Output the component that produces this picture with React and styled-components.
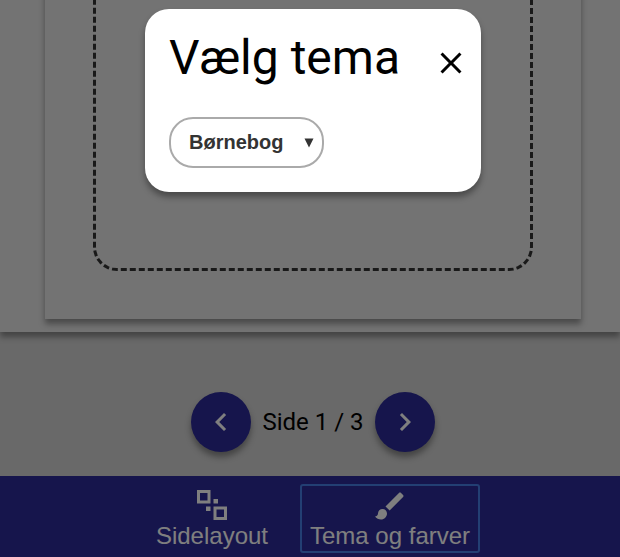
import React from "react";
import styled, { createGlobalStyle } from "styled-components";

const GlobalStyle = createGlobalStyle`
  *, *::before, *::after { box-sizing: border-box; }
  body { margin: 0; overflow: hidden; }
`;

const SHADOW = "0 5px 6px rgba(0, 0, 0, 0.36)";
const NAVY = "#2c2a99";

const Screen = styled.div`
  position: relative;
  display: flex;
  flex-direction: column;
  height: 557px;
  overflow: hidden;
  background: #d2d2d2;
  font-family: Roboto, sans-serif;
  color: #000;
`;

const Workspace = styled.main`
  display: flex;
  justify-content: center;
  align-items: flex-end;
  flex: none;
  height: 332px;
  padding: 0 0 13px 6px;
  background: #e6e6e6;
  box-shadow: ${SHADOW};
`;

const Paper = styled.section`
  flex: 0 0 536px;
  padding: 48px;
  background: #e6e6e6;
  box-shadow: ${SHADOW};
`;

const DropArea = styled.div`
  height: 660px;
  border: 3px dashed #333;
  border-radius: 24px;
`;

const Pager = styled.nav`
  display: flex;
  align-items: flex-start;
  justify-content: center;
  gap: 11.4px;
  flex: 1;
  padding: 60px 0 0 6px;
`;

const PageLabel = styled.span`
  font-size: 24px;
  line-height: 60px;
  white-space: nowrap;
`;

const RoundButton = styled.button`
  display: grid;
  place-items: center;
  width: 60px;
  height: 60px;
  padding: 0;
  border: 0;
  border-radius: 50%;
  background: ${NAVY};
  color: #fff;
  box-shadow: ${SHADOW};
`;

const Toolbar = styled.footer`
  display: flex;
  justify-content: center;
  gap: 22px;
  flex: 0 0 81px;
  padding: 8px 0 4px 6px;
  background: ${NAVY};
`;

const Tool = styled.button`
  display: flex;
  flex-direction: column;
  align-items: center;
  height: 69px;
  padding: 2px 8px 0;
  border: 2px solid ${(p) => (p.$focused ? "#467fe6" : "transparent")};
  border-radius: 3px;
  background: none;
  color: #fff;
  font: 24px/28px "Liberation Sans", Arial, sans-serif;
  white-space: nowrap;
`;

const Glyph = styled.svg`
  display: block;
  flex: none;
  width: ${(p) => p.$size || 36}px;
  height: ${(p) => p.$size || 36}px;
  fill: currentColor;
`;

const IconSlot = styled.span`
  display: grid;
  place-items: center;
  height: 34px;
`;

const Backdrop = styled.div`
  position: absolute;
  inset: 0;
  background: rgba(0, 0, 0, 0.5);
`;

const Dialog = styled.div`
  position: absolute;
  top: 9px;
  left: 145px;
  display: flex;
  flex-direction: column;
  align-items: flex-start;
  width: 336px;
  height: 183px;
  padding: 20px 12px 24px 24px;
  border-radius: 24px;
  background: #fff;
  box-shadow: ${SHADOW};
`;

const DialogHeader = styled.header`
  display: flex;
  align-items: center;
  justify-content: space-between;
  width: 100%;
  height: 56px;
`;

const Title = styled.h1`
  margin: 0;
  padding-top: 2px;
  font-size: 48px;
  font-weight: 400;
  line-height: 56px;
  white-space: nowrap;
`;

const CloseButton = styled.button`
  display: block;
  padding: 0;
  margin-top: 12px;
  border: 0;
  background: none;
  color: #000;
`;

const ThemeSelect = styled.button`
  display: flex;
  align-items: center;
  justify-content: space-between;
  width: 155px;
  height: 51px;
  margin-top: 32px;
  padding: 0 8px 1px 18px;
  border: 2px solid #aaa;
  border-radius: 24px;
  background: #fff;
  color: #333;
  font: bold 20px/24px "Liberation Sans", Arial, sans-serif;
`;

const Caret = styled.svg`
  width: 10px;
  height: 10px;
  margin-top: 2px;
  fill: currentColor;
`;

const CHEVRON_LEFT = "M15.41 7.41L14 6l-6 6 6 6 1.41-1.41L10.83 12z";
const CHEVRON_RIGHT = "M10 6L8.59 7.41 13.17 12l-4.58 4.59L10 18l6-6z";
const CLOSE =
  "M19 6.41L17.59 5 12 10.59 6.41 5 5 6.41 10.59 12 5 17.59 6.41 19 12 13.41 17.59 19 19 17.59 13.41 12z";
const BRUSH =
  "M7 14c-1.66 0-3 1.34-3 3 0 1.31-1.16 2-2 2 .92 1.22 2.49 2 4 2 2.21 0 4-1.79 4-4 0-1.66-1.34-3-3-3zm13.71-9.37l-1.34-1.34c-.39-.39-1.02-.39-1.41 0L9 12.25 11.75 15l8.96-8.96c.39-.39.39-1.02 0-1.41z";

function Icon({ path }) {
  return (
    <Glyph viewBox="0 0 24 24" aria-hidden="true">
      <path d={path} />
    </Glyph>
  );
}

function LayoutIcon() {
  return (
    <Glyph $size={30} viewBox="0 0 30 30" aria-hidden="true">
      <path
        fillRule="evenodd"
        d="M0 0h13.5v13.5H0zM3 3v7.5h7.5V3zM16.5 16.5H30V30H16.5zM19.5 19.5V27H27v-7.5zM16.500 9H21v4.500h-4.500zM9 16.500h4.500V21H9z"
      />
    </Glyph>
  );
}

export default function App() {
  return (
    <Screen>
      <GlobalStyle />
      <Workspace>
        <Paper>
          <DropArea />
        </Paper>
      </Workspace>
      <Pager>
        <RoundButton aria-label="Forrige side">
          <Icon path={CHEVRON_LEFT} />
        </RoundButton>
        <PageLabel>Side 1 / 3</PageLabel>
        <RoundButton aria-label="Næste side">
          <Icon path={CHEVRON_RIGHT} />
        </RoundButton>
      </Pager>
      <Toolbar>
        <Tool>
          <IconSlot>
            <LayoutIcon />
          </IconSlot>
          Sidelayout
        </Tool>
        <Tool $focused>
          <IconSlot>
            <Icon path={BRUSH} />
          </IconSlot>
          Tema og farver
        </Tool>
      </Toolbar>
      <Backdrop />
      <Dialog role="dialog" aria-label="Vælg tema">
        <DialogHeader>
          <Title>Vælg tema</Title>
          <CloseButton aria-label="Luk">
            <Icon path={CLOSE} />
          </CloseButton>
        </DialogHeader>
        <ThemeSelect>
          Børnebog
          <Caret viewBox="0 0 10 10" aria-hidden="true">
            <path d="M0.500 0.500h9L5 9.500z" />
          </Caret>
        </ThemeSelect>
      </Dialog>
    </Screen>
  );
}
